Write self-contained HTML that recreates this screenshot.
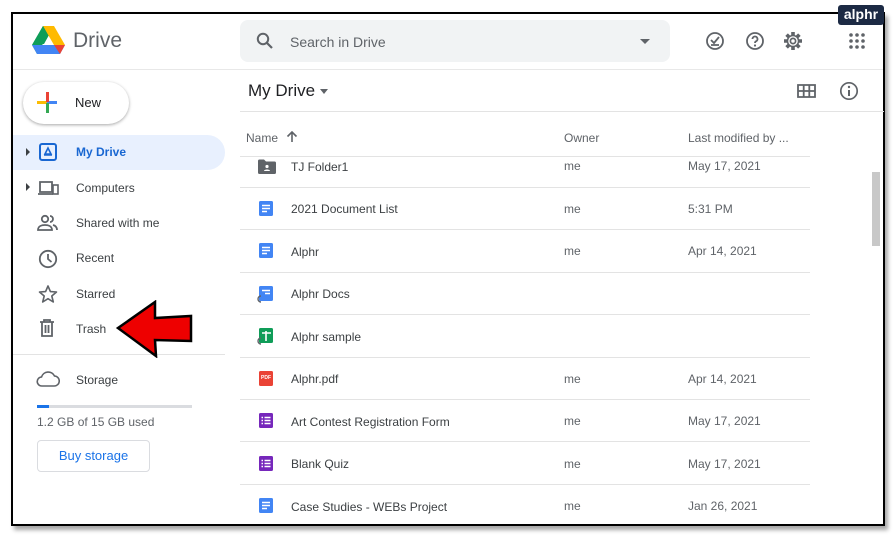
<!DOCTYPE html><html><head><style>
*{margin:0;padding:0;box-sizing:border-box}
body{width:896px;height:538px;background:#fff;position:relative;overflow:hidden;font-family:"Liberation Sans",Arial,sans-serif;color:#3c4043}
.a{position:absolute}
.frame{left:11px;top:12px;width:874px;height:514px;border:2.5px solid #000;box-shadow:3px 4px 4px rgba(0,0,0,.35);background:#fff}
.t{position:absolute;font-size:12px;color:#3c4043;white-space:nowrap}
.g{color:#5f6368}
.hl{position:absolute;height:1px;background:#e3e3e3}
</style></head><body>
<div class="a frame"></div>
<svg class="a" style="left:32px;top:26px" width="33" height="29" viewBox="0 0 33 29">
<polygon points="11,0 22,0 12,18 6,18" fill="#0f9d58"/>
<polygon points="11,0 0,19 5,28 16,9" fill="#0f9d58"/>
<polygon points="11,0 22,0 33,19 22,19" fill="#ffba00"/>
<polygon points="0,19 5,28 28,28 33,19" fill="#4285f4"/>
<polygon points="22,19 33,19 28,28" fill="#ea4335"/>
<polygon points="11,0 16,9 6,18 0,19" fill="#0f9d58"/>
</svg>
<div class="t" style="left:73px;top:29px;font-size:21px;color:#5f6368">Drive</div>
<div class="a" style="left:240px;top:20px;width:430px;height:42px;background:#f1f3f4;border-radius:8px"></div>
<svg class="a" style="left:256px;top:32px" width="18" height="18" viewBox="0 0 18 18"><circle cx="7" cy="7" r="5.2" fill="none" stroke="#5f6368" stroke-width="2"/><line x1="11" y1="11" x2="16" y2="16" stroke="#5f6368" stroke-width="2.2"/></svg>
<div class="t" style="left:290px;top:34px;font-size:14px;color:#5f6368">Search in Drive</div>
<div class="a" style="left:640px;top:39px;border:5px solid transparent;border-top:5px solid #5f6368"></div>
<svg class="a" style="left:705px;top:31px" width="20" height="20" viewBox="0 0 20 20"><circle cx="10" cy="10" r="8" fill="none" stroke="#5f6368" stroke-width="1.8"/><path d="M6 9l3 3 5-6M6 14h8" fill="none" stroke="#5f6368" stroke-width="1.8"/></svg>
<svg class="a" style="left:745px;top:31px" width="20" height="20" viewBox="0 0 20 20"><circle cx="10" cy="10" r="8" fill="none" stroke="#5f6368" stroke-width="1.8"/><path d="M7.5 8a2.5 2.5 0 1 1 3.5 2.3c-.8.4-1 .9-1 1.7" fill="none" stroke="#5f6368" stroke-width="1.8"/><circle cx="10" cy="14.5" r="1.1" fill="#5f6368"/></svg>
<svg class="a" style="left:783px;top:31px" width="20" height="20" viewBox="0 0 20 20"><g stroke="#5f6368" stroke-width="3.6" stroke-linecap="butt"><line x1="10" y1="1" x2="10" y2="19"/><line x1="1" y1="10" x2="19" y2="10"/><line x1="3.6" y1="3.6" x2="16.4" y2="16.4"/><line x1="16.4" y1="3.6" x2="3.6" y2="16.4"/></g><circle cx="10" cy="10" r="6.3" fill="#5f6368"/><circle cx="10" cy="10" r="4.8" fill="#fff"/><circle cx="10" cy="10" r="2.6" fill="none" stroke="#5f6368" stroke-width="1.7"/></svg>
<svg class="a" style="left:849px;top:33px" width="16" height="16" viewBox="0 0 16 16" fill="#5f6368"><circle cx="2" cy="2" r="1.8"/><circle cx="8" cy="2" r="1.8"/><circle cx="14" cy="2" r="1.8"/><circle cx="2" cy="8" r="1.8"/><circle cx="8" cy="8" r="1.8"/><circle cx="14" cy="8" r="1.8"/><circle cx="2" cy="14" r="1.8"/><circle cx="8" cy="14" r="1.8"/><circle cx="14" cy="14" r="1.8"/></svg>
<div class="a" style="left:838px;top:5px;width:46px;height:20px;background:#1c2a44;border-radius:3px;color:#fff;font-size:14px;text-align:center;line-height:19px;font-weight:bold">alphr</div>
<div class="hl" style="left:13px;top:69px;width:870px;background:#e8e8e8"></div>
<div class="a" style="left:23px;top:82px;width:106px;height:42px;border-radius:21px;background:#fff;box-shadow:0 1px 3px rgba(0,0,0,.35)"></div>
<div class="a" style="left:37px;top:101px;width:10px;height:3px;background:#fbbc04"></div>
<div class="a" style="left:47px;top:101px;width:10px;height:3px;background:#4285f4"></div>
<div class="a" style="left:46px;top:92px;width:3px;height:10px;background:#ea4335"></div>
<div class="a" style="left:46px;top:103px;width:3px;height:10px;background:#34a853"></div>
<div class="t" style="left:75px;top:95px;font-size:13px;color:#202124">New</div>
<div class="a" style="left:13px;top:135px;width:212px;height:35px;background:#e8f0fe;border-radius:0 18px 18px 0"></div>
<div class="a" style="left:26px;top:148px;border:4px solid transparent;border-left:4px solid #3c4043"></div>
<div class="a" style="left:26px;top:183px;border:4px solid transparent;border-left:4px solid #3c4043"></div>
<svg class="a" style="left:39px;top:143px" width="18" height="18" viewBox="0 0 18 18"><rect x="1" y="1" width="16" height="16" rx="2" fill="none" stroke="#1967d2" stroke-width="2"/><path d="M5 12h8M9 5l-3 6h6z" fill="none" stroke="#1967d2" stroke-width="1.6"/></svg>
<div class="t" style="left:76px;top:145px;color:#1967d2;font-weight:bold">My Drive</div>
<svg class="a" style="left:37px;top:180px" width="22" height="16" viewBox="0 0 22 16"><path d="M3 2h12v10H3zM1 14h15" fill="none" stroke="#5f6368" stroke-width="1.8"/><rect x="16" y="5" width="5" height="9" fill="none" stroke="#5f6368" stroke-width="1.6"/></svg>
<div class="t" style="left:76px;top:181px">Computers</div>
<svg class="a" style="left:37px;top:214px" width="22" height="18" viewBox="0 0 22 18"><circle cx="8" cy="5" r="3.2" fill="none" stroke="#5f6368" stroke-width="1.8"/><path d="M1 16c0-4 4-5 7-5s7 1 7 5z" fill="none" stroke="#5f6368" stroke-width="1.8"/><path d="M13 2a3 3 0 0 1 0 6M16 11c2 .5 4 2 4 5" fill="none" stroke="#5f6368" stroke-width="1.8"/></svg>
<div class="t" style="left:76px;top:216px">Shared with me</div>
<svg class="a" style="left:38px;top:249px" width="20" height="20" viewBox="0 0 20 20"><circle cx="10" cy="10" r="8.2" fill="none" stroke="#5f6368" stroke-width="1.8"/><path d="M10 5v5l3.5 3" fill="none" stroke="#5f6368" stroke-width="1.8"/></svg>
<div class="t" style="left:76px;top:251px">Recent</div>
<svg class="a" style="left:38px;top:284px" width="20" height="20" viewBox="0 0 20 20"><polygon points="10,2 12.4,7.6 18.5,8 13.8,12 15.3,18 10,14.7 4.7,18 6.2,12 1.5,8 7.6,7.6" fill="none" stroke="#5f6368" stroke-width="1.6" stroke-linejoin="round"/></svg>
<div class="t" style="left:76px;top:287px">Starred</div>
<svg class="a" style="left:39px;top:319px" width="16" height="18" viewBox="0 0 16 18"><path d="M1 3h14M5 3V1h6v2M3 3v14h10V3M6.5 6v8M9.5 6v8" fill="none" stroke="#5f6368" stroke-width="1.8"/></svg>
<div class="t" style="left:76px;top:322px">Trash</div>
<div class="hl" style="left:13px;top:354px;width:212px"></div>
<svg class="a" style="left:36px;top:371px" width="24" height="16" viewBox="0 0 24 16"><path d="M6 15a4.5 4.5 0 0 1-.5-9A7 7 0 0 1 18.5 5a5 5 0 0 1-.5 10z" fill="none" stroke="#5f6368" stroke-width="1.6"/></svg>
<div class="t" style="left:76px;top:373px">Storage</div>
<div class="a" style="left:37px;top:405px;width:155px;height:3px;background:#dadce0"></div>
<div class="a" style="left:37px;top:405px;width:12px;height:3px;background:#1a73e8"></div>
<div class="t" style="left:37px;top:415px;color:#5f6368">1.2 GB of 15 GB used</div>
<div class="a" style="left:37px;top:440px;width:113px;height:32px;border:1px solid #dadce0;border-radius:4px;color:#1a73e8;font-size:13px;text-align:center;line-height:30px">Buy storage</div>
<svg class="a" style="left:115px;top:300px" width="80" height="58" viewBox="0 0 80 58"><polygon points="3,28 40,2 40,18 76,16 76,41 40,40 41,56" fill="#ee0000" stroke="#000" stroke-width="2.5" stroke-linejoin="miter"/></svg>
<div class="t" style="left:248px;top:81px;font-size:17px;color:#202124">My Drive</div>
<div class="a" style="left:320px;top:89px;border:4.5px solid transparent;border-top:5px solid #5f6368"></div>
<svg class="a" style="left:797px;top:84px" width="19" height="14" viewBox="0 0 19 14"><path d="M1 1h17v12H1zM1 7h17M6.7 1v12M12.3 1v12" fill="none" stroke="#5f6368" stroke-width="1.8"/></svg>
<svg class="a" style="left:839px;top:81px" width="20" height="20" viewBox="0 0 20 20"><circle cx="10" cy="10" r="8.2" fill="none" stroke="#5f6368" stroke-width="1.7"/><path d="M10 9v6" stroke="#5f6368" stroke-width="2"/><circle cx="10" cy="6" r="1.2" fill="#5f6368"/></svg>
<div class="hl" style="left:240px;top:111px;width:644px"></div>
<div class="t g" style="left:246px;top:131px">Name</div>
<svg class="a" style="left:286px;top:131px" width="12" height="12" viewBox="0 0 12 12"><path d="M6 11V1M1.5 5.5L6 1l4.5 4.5" fill="none" stroke="#5f6368" stroke-width="1.6"/></svg>
<div class="t g" style="left:564px;top:131px">Owner</div>
<div class="t g" style="left:688px;top:131px">Last modified by ...</div>
<div class="a" style="left:872px;top:172px;width:8px;height:74px;background:#c8c8c8"></div>
<div class="hl" style="left:240px;top:156px;width:570px"></div>
<div class="hl" style="left:240px;top:187px;width:570px"></div>
<div class="hl" style="left:240px;top:229px;width:570px"></div>
<div class="hl" style="left:240px;top:272px;width:570px"></div>
<div class="hl" style="left:240px;top:314px;width:570px"></div>
<div class="hl" style="left:240px;top:357px;width:570px"></div>
<div class="hl" style="left:240px;top:399px;width:570px"></div>
<div class="hl" style="left:240px;top:441px;width:570px"></div>
<div class="hl" style="left:240px;top:484px;width:570px"></div>
<svg class="a" style="left:258px;top:159px" width="18" height="15" viewBox="0 0 18 15"><path d="M0 2a1.5 1.5 0 0 1 1.5-1.5H6l2 2h8.5A1.5 1.5 0 0 1 18 4v9.5a1.5 1.5 0 0 1-1.5 1.5h-15A1.5 1.5 0 0 1 0 13.5z" fill="#5f6368"/><circle cx="9" cy="7.5" r="1.6" fill="#fff"/><path d="M6 12c0-2 6-2 6 0z" fill="#fff"/></svg>
<div class="t" style="left:291px;top:160px">TJ Folder1</div>
<div class="t g" style="left:564px;top:159px">me</div><div class="t g" style="left:688px;top:159px">May 17, 2021</div>
<svg class="a" style="left:259px;top:201px" width="14" height="15" viewBox="0 0 14 15"><rect width="14" height="15" rx="1.5" fill="#4285f4"/><path d="M3 4.5h8M3 7.5h8M3 10.5h5" stroke="#fff" stroke-width="1.4"/></svg>
<div class="t" style="left:291px;top:202px">2021 Document List</div>
<div class="t g" style="left:564px;top:202px">me</div><div class="t g" style="left:688px;top:202px">5:31 PM</div>
<svg class="a" style="left:259px;top:243px" width="14" height="15" viewBox="0 0 14 15"><rect width="14" height="15" rx="1.5" fill="#4285f4"/><path d="M3 4.5h8M3 7.5h8M3 10.5h5" stroke="#fff" stroke-width="1.4"/></svg>
<div class="t" style="left:291px;top:245px">Alphr</div>
<div class="t g" style="left:564px;top:244px">me</div><div class="t g" style="left:688px;top:244px">Apr 14, 2021</div>
<svg class="a" style="left:257px;top:286px" width="16" height="17" viewBox="0 0 16 17"><rect x="2" width="14" height="15" rx="1.5" fill="#4285f4"/><path d="M5 4.5h8M8 7.5h5" stroke="#fff" stroke-width="1.4"/><path d="M4 16a3 3 0 0 1 0-6" fill="none" stroke="#5f6368" stroke-width="1.4"/></svg>
<div class="t" style="left:291px;top:287px">Alphr Docs</div>
<svg class="a" style="left:257px;top:328px" width="16" height="17" viewBox="0 0 16 17"><rect x="2" width="14" height="15" rx="1.5" fill="#0f9d58"/><path d="M5 5h9M9 3v10" stroke="#fff" stroke-width="1.6"/><path d="M4 16a3 3 0 0 1 0-6" fill="none" stroke="#5f6368" stroke-width="1.4"/></svg>
<div class="t" style="left:291px;top:330px">Alphr sample</div>
<div class="a" style="left:259px;top:371px;width:14px;height:15px;background:#ea4335;border-radius:1.5px;color:#fff;font-size:5px;font-weight:bold;text-align:center;line-height:15px">PDF</div>
<div class="t" style="left:291px;top:372px">Alphr.pdf</div>
<div class="t g" style="left:564px;top:372px">me</div><div class="t g" style="left:688px;top:372px">Apr 14, 2021</div>
<svg class="a" style="left:259px;top:413px" width="14" height="15" viewBox="0 0 14 15"><rect width="14" height="15" rx="1.5" fill="#7627bb"/><path d="M5.5 4.5h6M5.5 7.5h6M5.5 10.5h6M2.5 4.5h1.5M2.5 7.5h1.5M2.5 10.5h1.5" stroke="#fff" stroke-width="1.4"/></svg>
<div class="t" style="left:291px;top:415px">Art Contest Registration Form</div>
<div class="t g" style="left:564px;top:414px">me</div><div class="t g" style="left:688px;top:414px">May 17, 2021</div>
<svg class="a" style="left:259px;top:456px" width="14" height="15" viewBox="0 0 14 15"><rect width="14" height="15" rx="1.5" fill="#7627bb"/><path d="M5.5 4.5h6M5.5 7.5h6M5.5 10.5h6M2.5 4.5h1.5M2.5 7.5h1.5M2.5 10.5h1.5" stroke="#fff" stroke-width="1.4"/></svg>
<div class="t" style="left:291px;top:457px">Blank Quiz</div>
<div class="t g" style="left:564px;top:457px">me</div><div class="t g" style="left:688px;top:457px">May 17, 2021</div>
<svg class="a" style="left:259px;top:498px" width="14" height="15" viewBox="0 0 14 15"><rect width="14" height="15" rx="1.5" fill="#4285f4"/><path d="M3 4.5h8M3 7.5h8M3 10.5h5" stroke="#fff" stroke-width="1.4"/></svg>
<div class="t" style="left:291px;top:500px">Case Studies - WEBs Project</div>
<div class="t g" style="left:564px;top:499px">me</div><div class="t g" style="left:688px;top:499px">Jan 26, 2021</div>
</body></html>
